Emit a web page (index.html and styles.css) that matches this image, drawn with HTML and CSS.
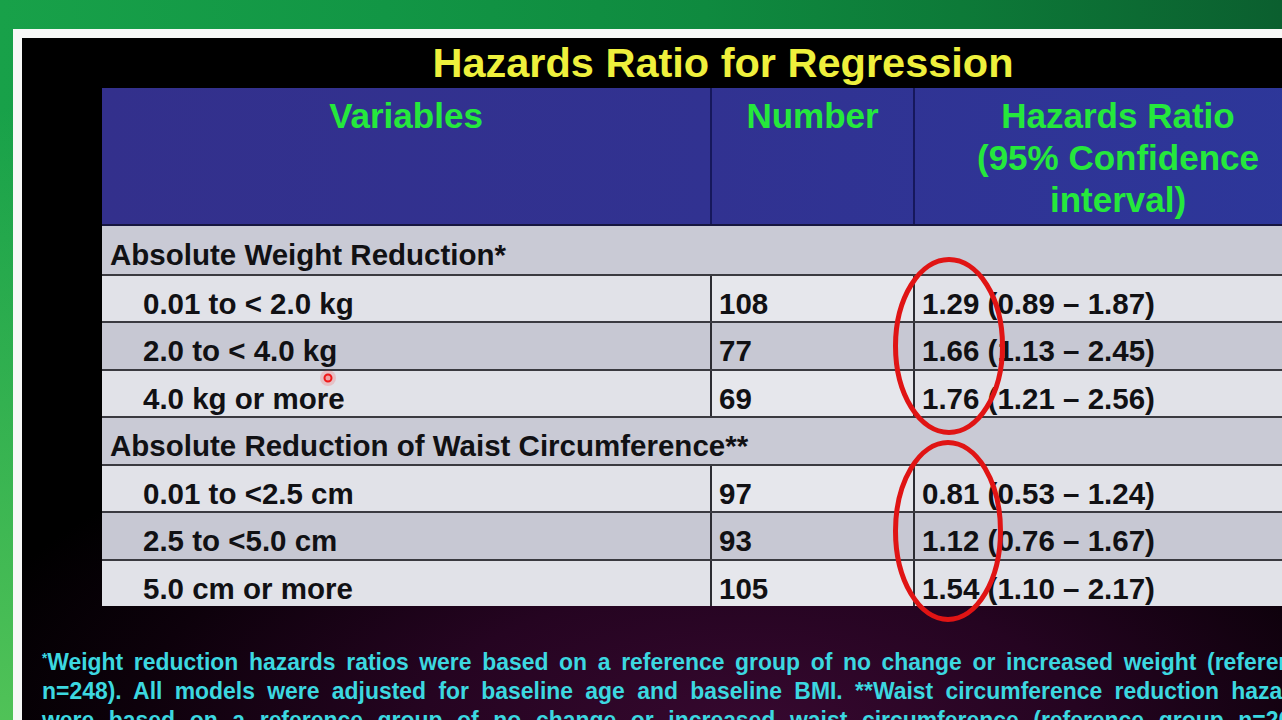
FILE: index.html
```html
<!DOCTYPE html>
<html lang="en">
<head>
<meta charset="utf-8">
<title>Hazards Ratio for Regression</title>
<link rel="stylesheet" href="styles.css">
</head>
<body>
<div class="frame">
  <div class="slide">
    <h1 class="title">Hazards Ratio for Regression</h1>
    <div class="table">
      <div class="head">
        <div class="th">Variables</div>
        <div class="th">Number</div>
        <div class="th">Hazards Ratio<br>(95% Confidence<br>interval)</div>
      </div>
      <div class="row section first">Absolute Weight Reduction*</div>
      <div class="row light">
        <div class="cell var">0.01 to &lt; 2.0 kg</div>
        <div class="cell num">108</div>
        <div class="cell hr">1.29 (0.89 – 1.87)</div>
      </div>
      <div class="row dark">
        <div class="cell var">2.0 to &lt; 4.0 kg</div>
        <div class="cell num">77</div>
        <div class="cell hr">1.66 (1.13 – 2.45)</div>
      </div>
      <div class="row light">
        <div class="cell var">4.0 kg or more</div>
        <div class="cell num">69</div>
        <div class="cell hr">1.76 (1.21 – 2.56)</div>
      </div>
      <div class="row section">Absolute Reduction of Waist Circumference**</div>
      <div class="row light">
        <div class="cell var">0.01 to &lt;2.5 cm</div>
        <div class="cell num">97</div>
        <div class="cell hr">0.81 (0.53 – 1.24)</div>
      </div>
      <div class="row dark">
        <div class="cell var">2.5 to &lt;5.0 cm</div>
        <div class="cell num">93</div>
        <div class="cell hr">1.12 (0.76 – 1.67)</div>
      </div>
      <div class="row light">
        <div class="cell var">5.0 cm or more</div>
        <div class="cell num">105</div>
        <div class="cell hr">1.54 (1.10 – 2.17)</div>
      </div>
    </div>
    <div class="notes">
      <p class="line"><sup>*</sup>Weight reduction hazards ratios were based on a reference group of no change or increased weight (reference</p>
      <p class="line">n=248). All models were adjusted for baseline age and baseline BMI. **Waist circumference reduction hazards</p>
      <p class="line">were based on a reference group of no change or increased waist circumference (reference group n=207).</p>
    </div>
    <svg class="marks" width="1402" height="690" viewBox="0 0 1402 690" aria-hidden="true">
      <ellipse cx="927" cy="308" rx="53.5" ry="86.5" fill="none" stroke="#e01414" stroke-width="5"/>
      <ellipse cx="926" cy="493" rx="52.5" ry="88.5" fill="none" stroke="#e01414" stroke-width="5"/>
      <circle cx="306" cy="340" r="8" fill="rgba(255,40,40,0.18)"/>
      <circle cx="306" cy="340" r="3.5" fill="rgba(255,120,120,0.45)" stroke="#f01818" stroke-width="2"/>
    </svg>
  </div>
</div>
</body>
</html>
```
FILE: styles.css
```css
* {
  box-sizing: border-box;
}

html, body {
  margin: 0;
  height: 720px;
  overflow: hidden;
}

body {
  font-family: "Liberation Sans", Arial, sans-serif;
  background:
    linear-gradient(180deg, rgba(80, 195, 85, 0) 15%, rgba(90, 200, 90, 0.85) 100%) 0 0 / 13px 100% no-repeat,
    linear-gradient(90deg, #18a149 0%, #129645 30%, #0f8a3f 55%, #0d7a38 75%, #0b5f2f 100%);
}

.frame {
  margin: 29px 0 0 13px;
  padding: 9px 0 0 9px;
  width: 1420px;
  height: 700px;
  background: #f7f8f7;
}

.slide {
  position: relative;
  width: 1402px;
  height: 690px;
  overflow: hidden;
  background:
    radial-gradient(ellipse 820px 360px at 52% 100%, #36082f 0%, #250421 40%, #0d010b 75%, #000 100%);
}

.title {
  margin: 0;
  padding-top: 1px;
  height: 50px;
  text-align: center;
  font-size: 41.5px;
  line-height: 48px;
  font-weight: bold;
  color: #eef03c;
}

.table {
  margin-left: 80px;
  width: 1219px;
}

.head {
  display: grid;
  grid-template-columns: 608px 203px 408px;
  height: 138px;
  background: linear-gradient(90deg, #33308c 0%, #313291 50%, #2d379a 100%);
  border-bottom: 2px solid #16163f;
}

.th {
  padding-top: 7px;
  text-align: center;
  font-size: 35px;
  line-height: 42px;
  font-weight: bold;
  color: #25e83c;
}

.th + .th {
  border-left: 2px solid #16185c;
}

.row {
  display: grid;
  grid-template-columns: 608px 203px 408px;
  height: 47.5px;
  border-top: 2px solid #3a3a40;
  font-size: 29.5px;
  line-height: 29px;
  font-weight: bold;
  color: #111114;
}

.light {
  background: #e1e2e8;
}

.dark {
  background: #c7c8d3;
}

.section {
  display: block;
  padding: 13px 0 0 8px;
  background: #c9cad5;
}

.section.first {
  border-top: 0;
  padding-top: 14px;
}

.cell {
  padding-top: 13px;
  white-space: nowrap;
}

.cell + .cell {
  border-left: 2px solid #2c2c32;
}

.var {
  padding-left: 41px;
}

.num,
.hr {
  padding-left: 7px;
}

.light .num {
  background: #e6e7ec;
}

.notes {
  margin: 41px 0 0 20px;
  width: 1336px;
  transform: scaleX(0.955);
  transform-origin: 0 0;
  color: #3cd8e0;
  font-size: 24px;
  line-height: 29px;
  font-weight: bold;
}

.line {
  margin: 0;
  text-align: justify;
  text-align-last: justify;
}

.line sup {
  font-size: 14px;
  line-height: 0;
  vertical-align: 7px;
}

.marks {
  position: absolute;
  left: 0;
  top: 0;
  pointer-events: none;
}
```
